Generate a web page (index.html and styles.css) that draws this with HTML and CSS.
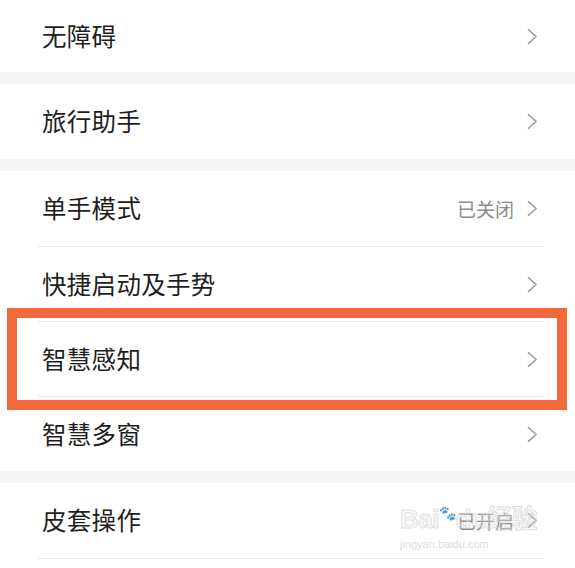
FILE: index.html
```html
<!DOCTYPE html>
<html lang="zh-CN">
<head>
<meta charset="utf-8">
<title>设置</title>
<link rel="stylesheet" href="styles.css">
</head>
<body>
<div class="page">
  <section class="group">
    <div class="row first">
      <span class="label">无障碍</span>
      <span class="trail"><svg class="chev" viewBox="0 0 12 18"><polyline points="1.5,1.5 10,9 1.5,16.5"/></svg></span>
    </div>
  </section>
  <div class="band"></div>
  <section class="group">
    <div class="row">
      <span class="label">旅行助手</span>
      <span class="trail"><svg class="chev" viewBox="0 0 12 18"><polyline points="1.5,1.5 10,9 1.5,16.5"/></svg></span>
    </div>
  </section>
  <div class="band"></div>
  <section class="group">
    <div class="row">
      <span class="label">单手模式</span>
      <span class="trail"><span class="value">已关闭</span><svg class="chev" viewBox="0 0 12 18"><polyline points="1.5,1.5 10,9 1.5,16.5"/></svg></span>
    </div>
    <div class="row">
      <span class="label">快捷启动及手势</span>
      <span class="trail"><svg class="chev" viewBox="0 0 12 18"><polyline points="1.5,1.5 10,9 1.5,16.5"/></svg></span>
    </div>
    <div class="row">
      <span class="label">智慧感知</span>
      <span class="trail"><svg class="chev" viewBox="0 0 12 18"><polyline points="1.5,1.5 10,9 1.5,16.5"/></svg></span>
    </div>
    <div class="row">
      <span class="label">智慧多窗</span>
      <span class="trail"><svg class="chev" viewBox="0 0 12 18"><polyline points="1.5,1.5 10,9 1.5,16.5"/></svg></span>
    </div>
  </section>
  <div class="band"></div>
  <section class="group">
    <div class="row">
      <span class="label">皮套操作</span>
      <span class="trail"><span class="value">已开启</span><svg class="chev" viewBox="0 0 12 18"><polyline points="1.5,1.5 10,9 1.5,16.5"/></svg></span>
    </div>
    <div class="row tail"></div>
  </section>

  <div class="highlight"></div>
  <div class="watermark">
    <div class="wm-logo">Bai<span class="paw">&#x1F43E;</span>du经验</div>
    <div class="wm-url">jingyan.baidu.com</div>
  </div>
</div>
</body>
</html>
```

FILE: styles.css
```css
* { box-sizing: border-box; }
html, body { margin: 0; padding: 0; background: #ffffff; }
body {
  font-family: "Noto Sans CJK SC", "Noto Sans", sans-serif;
  color: #1e1e1e;
  width: 575px;
  height: 568px;
  overflow: hidden;
}
.page { position: relative; width: 575px; height: 568px; overflow: hidden; }
.group { display: flex; flex-direction: column; }
.band { height: 12px; background: #f5f5f5; }
.row {
  display: flex;
  align-items: center;
  justify-content: space-between;
  height: 75px;
  margin: 0 32px 0 38px;
  padding: 0 5px 0 4px;
}
.row.first { height: 72px; }
.row.tail { height: 6px; }
.row + .row { border-top: 1px solid #e9e9e9; }
.label { font-size: 24.5px; line-height: 1; letter-spacing: 0.3px; }
.trail { display: flex; align-items: center; gap: 13px; }
.value { font-size: 19px; color: #8c8c8c; line-height: 1; }
.chev { width: 11px; height: 17px; display: block; }
.chev polyline { fill: none; stroke: #9d9d9d; stroke-width: 1.6; stroke-linecap: round; stroke-linejoin: round; }

.highlight {
  position: absolute;
  left: 7px;
  top: 308px;
  width: 560px;
  height: 102px;
  border: 10px solid #f4693b;
  pointer-events: none;
}
.watermark {
  position: absolute;
  left: 400px;
  top: 506px;
  display: flex;
  flex-direction: column;
  align-items: flex-start;
  white-space: nowrap;
  font-family: "Liberation Sans", "Noto Sans CJK SC", sans-serif;
  pointer-events: none;
}
.wm-logo { font-size: 26px; font-weight: 700; line-height: 1; letter-spacing: -0.5px; color: rgba(235,235,235,0.35); -webkit-text-stroke: 1px rgba(200,200,200,0.55); }
.paw { font-size: 14px; vertical-align: top; }
.wm-url { font-size: 11px; margin-top: 6px; color: rgba(210,210,210,0.8); }
```
